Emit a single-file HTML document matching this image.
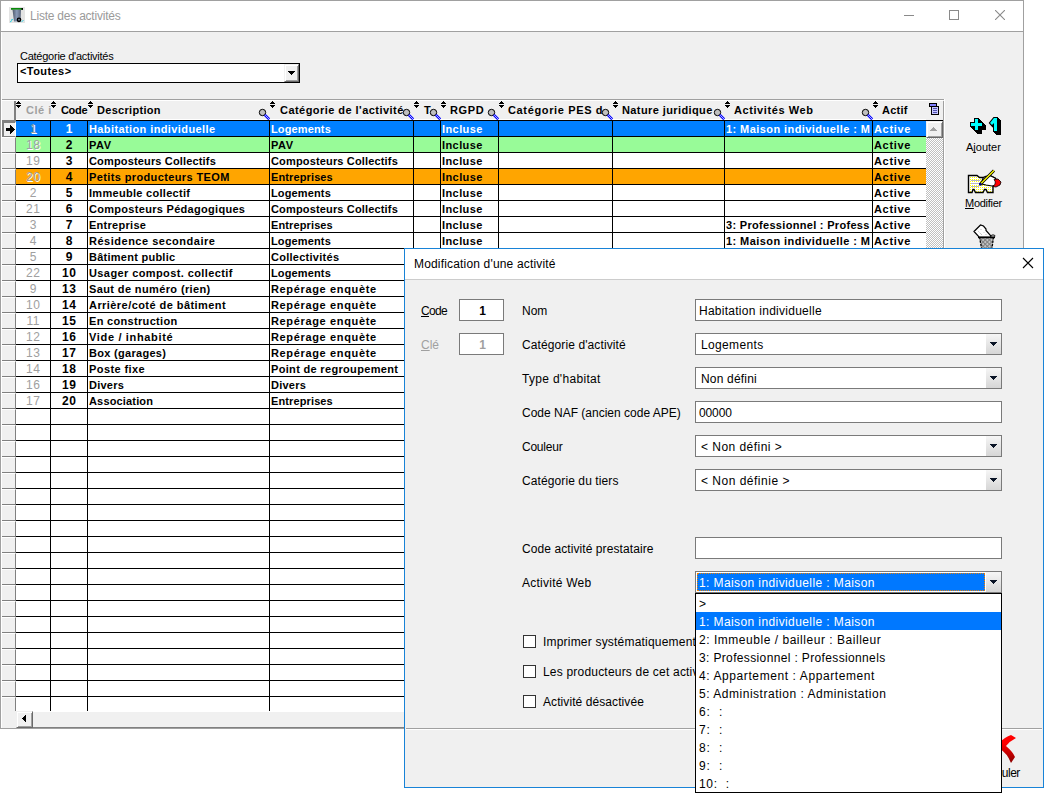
<!DOCTYPE html>
<html><head><meta charset="utf-8">
<style>
*{box-sizing:border-box}
body{margin:0;width:1044px;height:794px;background:#fff;position:relative;overflow:hidden;font-family:"Liberation Sans",sans-serif}
.a{position:absolute}
.t{position:absolute;white-space:nowrap;line-height:16px}
svg{shape-rendering:crispEdges}
.sm{shape-rendering:auto}
</style></head><body>

<div class="a" style="left:0;top:0;width:1024px;height:729px;border:1px solid #a0a0a0;background:#f0f0f0"></div>
<div class="a" style="left:1px;top:1px;width:1022px;height:30px;background:#fff"></div>
<div class="a" style="left:1px;top:31px;width:1022px;height:1px;background:#a0a0a0"></div>
<div class="a" style="left:1px;top:32px;width:1px;height:696px;background:#fff"></div>
<svg class="a sm" style="left:9px;top:7px" width="16" height="16" viewBox="0 0 16 16">
<defs><linearGradient id="bg1" x1="0" y1="0" x2="1" y2="0"><stop offset="0" stop-color="#505a6a"/><stop offset="0.5" stop-color="#8a9ab8"/><stop offset="1" stop-color="#5a6478"/></linearGradient></defs>
<rect x="0" y="0" width="16" height="16" fill="#e4e4e4"/>
<rect x="2" y="1" width="12" height="1.8" fill="#0a8a0a"/><rect x="12.5" y="1" width="1.5" height="1.8" fill="#000"/>
<path d="M3.5 2.8 L12 2.8 L11.5 14.5 L5 14.5 Z" fill="url(#bg1)"/>
<circle cx="10" cy="12.8" r="1.7" fill="#607080" stroke="#000" stroke-width="1.3"/>
<path d="M1 15 L3 13.5 M2 13 L4 12.5 M12.5 15 L14.5 13" stroke="#30d0e0" stroke-width="1"/>
</svg>
<div class="t" style="left:30px;top:8px;font-size:12px;color:#9a9a9a;line-height:16px;letter-spacing:-0.222px;">Liste des activités</div>
<div class="a" style="left:904px;top:15px;width:10px;height:1px;background:#8a8a8a"></div>
<div class="a" style="left:949px;top:10px;width:10px;height:10px;border:1px solid #8a8a8a"></div>
<svg class="a sm" style="left:995px;top:10px" width="10" height="10"><path d="M0 0 L10 10 M10 0 L0 10" stroke="#8a8a8a" stroke-width="1.1"/></svg>
<div class="t" style="left:20px;top:48px;font-size:11px;color:#000;line-height:16px;letter-spacing:-0.250px;">Catégorie d'activités</div>
<div class="a" style="left:17px;top:63px;width:283px;height:20px;border:1px solid #000;background:#fff"></div>
<div class="t" style="left:20px;top:63px;font-size:11px;color:#000;line-height:16px;font-weight:bold;letter-spacing:0.429px;">&lt;Toutes&gt;</div>
<div class="a" style="left:284px;top:64px;width:15px;height:18px;background:#f0f0f0;border-top:1px solid #f0f0f0;border-left:1px solid #f0f0f0;border-right:1px solid #696969;border-bottom:1px solid #696969;box-shadow:inset 1px 1px 0 #fff,inset -1px -1px 0 #a0a0a0"></div>
<svg class="a" style="left:288px;top:71px" width="7" height="4"><path d="M0 0 H7 V1 H6 V2 H5 V3 H4 V4 H3 V3 H2 V2 H1 V1 H0 Z" fill="#000"/></svg>
<div class="a" style="left:2px;top:99px;width:942px;height:1px;background:#a0a0a0"></div>
<div class="a" style="left:2px;top:100px;width:941px;height:1px;background:#fff"></div>
<div class="a" style="left:16px;top:120px;width:910px;height:591px;background:#fff"></div>
<div class="a" style="left:2px;top:121px;width:14px;height:16px;background:#f0f0f0;border-top:2px solid #808080;border-left:2px solid #808080;border-right:1px solid #fff;border-bottom:1px solid #808080"></div>
<div class="a" style="left:2px;top:137px;width:14px;height:16px;background:#f0f0f0;border-top:1px solid #fff;border-right:1px solid #808080;border-bottom:1px solid #808080;"></div>
<div class="a" style="left:2px;top:153px;width:14px;height:16px;background:#f0f0f0;border-top:1px solid #fff;border-right:1px solid #808080;border-bottom:1px solid #808080;"></div>
<div class="a" style="left:2px;top:169px;width:14px;height:16px;background:#f0f0f0;border-top:1px solid #fff;border-right:1px solid #808080;border-bottom:1px solid #808080;"></div>
<div class="a" style="left:2px;top:185px;width:14px;height:16px;background:#f0f0f0;border-top:1px solid #fff;border-right:1px solid #808080;border-bottom:1px solid #808080;"></div>
<div class="a" style="left:2px;top:201px;width:14px;height:16px;background:#f0f0f0;border-top:1px solid #fff;border-right:1px solid #808080;border-bottom:1px solid #808080;"></div>
<div class="a" style="left:2px;top:217px;width:14px;height:16px;background:#f0f0f0;border-top:1px solid #fff;border-right:1px solid #808080;border-bottom:1px solid #808080;"></div>
<div class="a" style="left:2px;top:233px;width:14px;height:16px;background:#f0f0f0;border-top:1px solid #fff;border-right:1px solid #808080;border-bottom:1px solid #808080;"></div>
<div class="a" style="left:2px;top:249px;width:14px;height:16px;background:#f0f0f0;border-top:1px solid #fff;border-right:1px solid #808080;border-bottom:1px solid #808080;"></div>
<div class="a" style="left:2px;top:265px;width:14px;height:16px;background:#f0f0f0;border-top:1px solid #fff;border-right:1px solid #808080;border-bottom:1px solid #808080;"></div>
<div class="a" style="left:2px;top:281px;width:14px;height:16px;background:#f0f0f0;border-top:1px solid #fff;border-right:1px solid #808080;border-bottom:1px solid #808080;"></div>
<div class="a" style="left:2px;top:297px;width:14px;height:16px;background:#f0f0f0;border-top:1px solid #fff;border-right:1px solid #808080;border-bottom:1px solid #808080;"></div>
<div class="a" style="left:2px;top:313px;width:14px;height:16px;background:#f0f0f0;border-top:1px solid #fff;border-right:1px solid #808080;border-bottom:1px solid #808080;"></div>
<div class="a" style="left:2px;top:329px;width:14px;height:16px;background:#f0f0f0;border-top:1px solid #fff;border-right:1px solid #808080;border-bottom:1px solid #808080;"></div>
<div class="a" style="left:2px;top:345px;width:14px;height:16px;background:#f0f0f0;border-top:1px solid #fff;border-right:1px solid #808080;border-bottom:1px solid #808080;"></div>
<div class="a" style="left:2px;top:361px;width:14px;height:16px;background:#f0f0f0;border-top:1px solid #fff;border-right:1px solid #808080;border-bottom:1px solid #808080;"></div>
<div class="a" style="left:2px;top:377px;width:14px;height:16px;background:#f0f0f0;border-top:1px solid #fff;border-right:1px solid #808080;border-bottom:1px solid #808080;"></div>
<div class="a" style="left:2px;top:393px;width:14px;height:16px;background:#f0f0f0;border-top:1px solid #fff;border-right:1px solid #808080;border-bottom:1px solid #808080;"></div>
<div class="a" style="left:2px;top:409px;width:14px;height:16px;background:#f0f0f0;border-top:1px solid #fff;border-right:1px solid #808080;border-bottom:1px solid #808080;"></div>
<div class="a" style="left:2px;top:425px;width:14px;height:16px;background:#f0f0f0;border-top:1px solid #fff;border-right:1px solid #808080;border-bottom:1px solid #808080;"></div>
<div class="a" style="left:2px;top:441px;width:14px;height:16px;background:#f0f0f0;border-top:1px solid #fff;border-right:1px solid #808080;border-bottom:1px solid #808080;"></div>
<div class="a" style="left:2px;top:457px;width:14px;height:16px;background:#f0f0f0;border-top:1px solid #fff;border-right:1px solid #808080;border-bottom:1px solid #808080;"></div>
<div class="a" style="left:2px;top:473px;width:14px;height:16px;background:#f0f0f0;border-top:1px solid #fff;border-right:1px solid #808080;border-bottom:1px solid #808080;"></div>
<div class="a" style="left:2px;top:489px;width:14px;height:16px;background:#f0f0f0;border-top:1px solid #fff;border-right:1px solid #808080;border-bottom:1px solid #808080;"></div>
<div class="a" style="left:2px;top:505px;width:14px;height:16px;background:#f0f0f0;border-top:1px solid #fff;border-right:1px solid #808080;border-bottom:1px solid #808080;"></div>
<div class="a" style="left:2px;top:521px;width:14px;height:16px;background:#f0f0f0;border-top:1px solid #fff;border-right:1px solid #808080;border-bottom:1px solid #808080;"></div>
<div class="a" style="left:2px;top:537px;width:14px;height:16px;background:#f0f0f0;border-top:1px solid #fff;border-right:1px solid #808080;border-bottom:1px solid #808080;"></div>
<div class="a" style="left:2px;top:553px;width:14px;height:16px;background:#f0f0f0;border-top:1px solid #fff;border-right:1px solid #808080;border-bottom:1px solid #808080;"></div>
<div class="a" style="left:2px;top:569px;width:14px;height:16px;background:#f0f0f0;border-top:1px solid #fff;border-right:1px solid #808080;border-bottom:1px solid #808080;"></div>
<div class="a" style="left:2px;top:585px;width:14px;height:16px;background:#f0f0f0;border-top:1px solid #fff;border-right:1px solid #808080;border-bottom:1px solid #808080;"></div>
<div class="a" style="left:2px;top:601px;width:14px;height:16px;background:#f0f0f0;border-top:1px solid #fff;border-right:1px solid #808080;border-bottom:1px solid #808080;"></div>
<div class="a" style="left:2px;top:617px;width:14px;height:16px;background:#f0f0f0;border-top:1px solid #fff;border-right:1px solid #808080;border-bottom:1px solid #808080;"></div>
<div class="a" style="left:2px;top:633px;width:14px;height:16px;background:#f0f0f0;border-top:1px solid #fff;border-right:1px solid #808080;border-bottom:1px solid #808080;"></div>
<div class="a" style="left:2px;top:649px;width:14px;height:16px;background:#f0f0f0;border-top:1px solid #fff;border-right:1px solid #808080;border-bottom:1px solid #808080;"></div>
<div class="a" style="left:2px;top:665px;width:14px;height:16px;background:#f0f0f0;border-top:1px solid #fff;border-right:1px solid #808080;border-bottom:1px solid #808080;"></div>
<div class="a" style="left:2px;top:681px;width:14px;height:16px;background:#f0f0f0;border-top:1px solid #fff;border-right:1px solid #808080;border-bottom:1px solid #808080;"></div>
<div class="a" style="left:2px;top:697px;width:14px;height:14px;background:#f0f0f0;border-top:1px solid #fff;border-right:1px solid #808080;"></div>
<div class="a" style="left:2px;top:101px;width:14px;height:20px;background:#f0f0f0;border-right:1px solid #808080;border-bottom:1px solid #808080"></div>
<div class="a" style="left:14px;top:101px;width:1px;height:19px;background:#808080"></div>
<svg class="a" style="left:6px;top:125px" width="9" height="10"><path d="M0 3 H4 V0 H5 V1 H6 V2 H7 V3 H8 V4 H9 V5 H8 V6 H7 V7 H6 V8 H5 V9 H4 V6 H0 Z" fill="#000"/></svg>
<div class="a" style="left:16px;top:120px;width:910px;height:16px;background:#0080ff"></div>
<div class="a" style="left:16px;top:136px;width:910px;height:16px;background:#98fb98"></div>
<div class="a" style="left:16px;top:168px;width:910px;height:16px;background:#ffa500"></div>
<div class="a" style="left:16px;top:120px;width:910px;height:1px;background:#000"></div>
<div class="a" style="left:16px;top:136px;width:910px;height:1px;background:#000"></div>
<div class="a" style="left:16px;top:152px;width:910px;height:1px;background:#000"></div>
<div class="a" style="left:16px;top:168px;width:910px;height:1px;background:#000"></div>
<div class="a" style="left:16px;top:184px;width:910px;height:1px;background:#000"></div>
<div class="a" style="left:16px;top:200px;width:910px;height:1px;background:#000"></div>
<div class="a" style="left:16px;top:216px;width:910px;height:1px;background:#000"></div>
<div class="a" style="left:16px;top:232px;width:910px;height:1px;background:#000"></div>
<div class="a" style="left:16px;top:248px;width:910px;height:1px;background:#000"></div>
<div class="a" style="left:16px;top:264px;width:910px;height:1px;background:#000"></div>
<div class="a" style="left:16px;top:280px;width:910px;height:1px;background:#000"></div>
<div class="a" style="left:16px;top:296px;width:910px;height:1px;background:#000"></div>
<div class="a" style="left:16px;top:312px;width:910px;height:1px;background:#000"></div>
<div class="a" style="left:16px;top:328px;width:910px;height:1px;background:#000"></div>
<div class="a" style="left:16px;top:344px;width:910px;height:1px;background:#000"></div>
<div class="a" style="left:16px;top:360px;width:910px;height:1px;background:#000"></div>
<div class="a" style="left:16px;top:376px;width:910px;height:1px;background:#000"></div>
<div class="a" style="left:16px;top:392px;width:910px;height:1px;background:#000"></div>
<div class="a" style="left:16px;top:408px;width:910px;height:1px;background:#000"></div>
<div class="a" style="left:16px;top:424px;width:910px;height:1px;background:#000"></div>
<div class="a" style="left:16px;top:440px;width:910px;height:1px;background:#000"></div>
<div class="a" style="left:16px;top:456px;width:910px;height:1px;background:#000"></div>
<div class="a" style="left:16px;top:472px;width:910px;height:1px;background:#000"></div>
<div class="a" style="left:16px;top:488px;width:910px;height:1px;background:#000"></div>
<div class="a" style="left:16px;top:504px;width:910px;height:1px;background:#000"></div>
<div class="a" style="left:16px;top:520px;width:910px;height:1px;background:#000"></div>
<div class="a" style="left:16px;top:536px;width:910px;height:1px;background:#000"></div>
<div class="a" style="left:16px;top:552px;width:910px;height:1px;background:#000"></div>
<div class="a" style="left:16px;top:568px;width:910px;height:1px;background:#000"></div>
<div class="a" style="left:16px;top:584px;width:910px;height:1px;background:#000"></div>
<div class="a" style="left:16px;top:600px;width:910px;height:1px;background:#000"></div>
<div class="a" style="left:16px;top:616px;width:910px;height:1px;background:#000"></div>
<div class="a" style="left:16px;top:632px;width:910px;height:1px;background:#000"></div>
<div class="a" style="left:16px;top:648px;width:910px;height:1px;background:#000"></div>
<div class="a" style="left:16px;top:664px;width:910px;height:1px;background:#000"></div>
<div class="a" style="left:16px;top:680px;width:910px;height:1px;background:#000"></div>
<div class="a" style="left:16px;top:696px;width:910px;height:1px;background:#000"></div>
<div class="a" style="left:50px;top:120px;width:1px;height:591px;background:#000"></div>
<div class="a" style="left:87px;top:120px;width:1px;height:591px;background:#000"></div>
<div class="a" style="left:269px;top:120px;width:1px;height:591px;background:#000"></div>
<div class="a" style="left:413px;top:120px;width:1px;height:591px;background:#000"></div>
<div class="a" style="left:440px;top:120px;width:1px;height:591px;background:#000"></div>
<div class="a" style="left:498px;top:120px;width:1px;height:591px;background:#000"></div>
<div class="a" style="left:612px;top:120px;width:1px;height:591px;background:#000"></div>
<div class="a" style="left:724px;top:120px;width:1px;height:591px;background:#000"></div>
<div class="a" style="left:872px;top:120px;width:1px;height:591px;background:#000"></div>
<div class="t" style="left:16px;top:121px;width:34px;text-align:center;font-size:12px;letter-spacing:0.4px;text-indent:0.4px;color:#a0a0a0;text-shadow:1px 1px 0 #fff">1</div>
<div class="t" style="left:51px;top:121px;width:36px;text-align:center;font-size:12px;font-weight:bold;letter-spacing:0.5px;text-indent:0.5px;color:#fff">1</div>
<div class="t" style="left:89px;top:121px;font-size:11px;color:#fff;line-height:16px;font-weight:bold;letter-spacing:0.395px;">Habitation individuelle</div>
<div class="t" style="left:271px;top:121px;font-size:11px;color:#fff;line-height:16px;font-weight:bold;letter-spacing:0.138px;">Logements</div>
<div class="t" style="left:442px;top:121px;font-size:11px;color:#fff;line-height:16px;font-weight:bold;letter-spacing:0.417px;">Incluse</div>
<div class="t" style="left:726px;top:121px;font-size:11px;color:#fff;line-height:16px;font-weight:bold;letter-spacing:0.428px;">1: Maison individuelle : M</div>
<div class="t" style="left:874px;top:121px;font-size:11px;color:#fff;line-height:16px;font-weight:bold;letter-spacing:0.680px;">Active</div>
<div class="t" style="left:16px;top:137px;width:34px;text-align:center;font-size:12px;letter-spacing:0.4px;text-indent:0.4px;color:#a0a0a0;text-shadow:1px 1px 0 #fff">18</div>
<div class="t" style="left:51px;top:137px;width:36px;text-align:center;font-size:12px;font-weight:bold;letter-spacing:0.5px;text-indent:0.5px;color:#000">2</div>
<div class="t" style="left:89px;top:137px;font-size:11px;color:#000;line-height:16px;font-weight:bold;letter-spacing:0.500px;">PAV</div>
<div class="t" style="left:271px;top:137px;font-size:11px;color:#000;line-height:16px;font-weight:bold;letter-spacing:0.500px;">PAV</div>
<div class="t" style="left:442px;top:137px;font-size:11px;color:#000;line-height:16px;font-weight:bold;letter-spacing:0.417px;">Incluse</div>
<div class="t" style="left:874px;top:137px;font-size:11px;color:#000;line-height:16px;font-weight:bold;letter-spacing:0.680px;">Active</div>
<div class="t" style="left:16px;top:153px;width:34px;text-align:center;font-size:12px;letter-spacing:0.4px;text-indent:0.4px;color:#a0a0a0;text-shadow:1px 1px 0 #fff">19</div>
<div class="t" style="left:51px;top:153px;width:36px;text-align:center;font-size:12px;font-weight:bold;letter-spacing:0.5px;text-indent:0.5px;color:#000">3</div>
<div class="t" style="left:89px;top:153px;font-size:11px;color:#000;line-height:16px;font-weight:bold;letter-spacing:0.157px;">Composteurs Collectifs</div>
<div class="t" style="left:271px;top:153px;font-size:11px;color:#000;line-height:16px;font-weight:bold;letter-spacing:0.157px;">Composteurs Collectifs</div>
<div class="t" style="left:442px;top:153px;font-size:11px;color:#000;line-height:16px;font-weight:bold;letter-spacing:0.417px;">Incluse</div>
<div class="t" style="left:874px;top:153px;font-size:11px;color:#000;line-height:16px;font-weight:bold;letter-spacing:0.680px;">Active</div>
<div class="t" style="left:16px;top:169px;width:34px;text-align:center;font-size:12px;letter-spacing:0.4px;text-indent:0.4px;color:#a0a0a0;text-shadow:1px 1px 0 #fff">20</div>
<div class="t" style="left:51px;top:169px;width:36px;text-align:center;font-size:12px;font-weight:bold;letter-spacing:0.5px;text-indent:0.5px;color:#000">4</div>
<div class="t" style="left:89px;top:169px;font-size:11px;color:#000;line-height:16px;font-weight:bold;letter-spacing:0.377px;">Petits producteurs TEOM</div>
<div class="t" style="left:271px;top:169px;font-size:11px;color:#000;line-height:16px;font-weight:bold;letter-spacing:0.120px;">Entreprises</div>
<div class="t" style="left:442px;top:169px;font-size:11px;color:#000;line-height:16px;font-weight:bold;letter-spacing:0.417px;">Incluse</div>
<div class="t" style="left:874px;top:169px;font-size:11px;color:#000;line-height:16px;font-weight:bold;letter-spacing:0.680px;">Active</div>
<div class="t" style="left:16px;top:185px;width:34px;text-align:center;font-size:12px;letter-spacing:0.4px;text-indent:0.4px;color:#a0a0a0;text-shadow:1px 1px 0 #fff">2</div>
<div class="t" style="left:51px;top:185px;width:36px;text-align:center;font-size:12px;font-weight:bold;letter-spacing:0.5px;text-indent:0.5px;color:#000">5</div>
<div class="t" style="left:89px;top:185px;font-size:11px;color:#000;line-height:16px;font-weight:bold;letter-spacing:0.294px;">Immeuble collectif</div>
<div class="t" style="left:271px;top:185px;font-size:11px;color:#000;line-height:16px;font-weight:bold;letter-spacing:0.138px;">Logements</div>
<div class="t" style="left:442px;top:185px;font-size:11px;color:#000;line-height:16px;font-weight:bold;letter-spacing:0.417px;">Incluse</div>
<div class="t" style="left:874px;top:185px;font-size:11px;color:#000;line-height:16px;font-weight:bold;letter-spacing:0.680px;">Active</div>
<div class="t" style="left:16px;top:201px;width:34px;text-align:center;font-size:12px;letter-spacing:0.4px;text-indent:0.4px;color:#a0a0a0;text-shadow:1px 1px 0 #fff">21</div>
<div class="t" style="left:51px;top:201px;width:36px;text-align:center;font-size:12px;font-weight:bold;letter-spacing:0.5px;text-indent:0.5px;color:#000">6</div>
<div class="t" style="left:89px;top:201px;font-size:11px;color:#000;line-height:16px;font-weight:bold;letter-spacing:0.296px;">Composteurs Pédagogiques</div>
<div class="t" style="left:271px;top:201px;font-size:11px;color:#000;line-height:16px;font-weight:bold;letter-spacing:0.157px;">Composteurs Collectifs</div>
<div class="t" style="left:442px;top:201px;font-size:11px;color:#000;line-height:16px;font-weight:bold;letter-spacing:0.417px;">Incluse</div>
<div class="t" style="left:874px;top:201px;font-size:11px;color:#000;line-height:16px;font-weight:bold;letter-spacing:0.680px;">Active</div>
<div class="t" style="left:16px;top:217px;width:34px;text-align:center;font-size:12px;letter-spacing:0.4px;text-indent:0.4px;color:#a0a0a0;text-shadow:1px 1px 0 #fff">3</div>
<div class="t" style="left:51px;top:217px;width:36px;text-align:center;font-size:12px;font-weight:bold;letter-spacing:0.5px;text-indent:0.5px;color:#000">7</div>
<div class="t" style="left:89px;top:217px;font-size:11px;color:#000;line-height:16px;font-weight:bold;letter-spacing:0.278px;">Entreprise</div>
<div class="t" style="left:271px;top:217px;font-size:11px;color:#000;line-height:16px;font-weight:bold;letter-spacing:0.120px;">Entreprises</div>
<div class="t" style="left:442px;top:217px;font-size:11px;color:#000;line-height:16px;font-weight:bold;letter-spacing:0.417px;">Incluse</div>
<div class="t" style="left:726px;top:217px;font-size:11px;color:#000;line-height:16px;font-weight:bold;letter-spacing:0.308px;">3: Professionnel : Profess</div>
<div class="t" style="left:874px;top:217px;font-size:11px;color:#000;line-height:16px;font-weight:bold;letter-spacing:0.680px;">Active</div>
<div class="t" style="left:16px;top:233px;width:34px;text-align:center;font-size:12px;letter-spacing:0.4px;text-indent:0.4px;color:#a0a0a0;text-shadow:1px 1px 0 #fff">4</div>
<div class="t" style="left:51px;top:233px;width:36px;text-align:center;font-size:12px;font-weight:bold;letter-spacing:0.5px;text-indent:0.5px;color:#000">8</div>
<div class="t" style="left:89px;top:233px;font-size:11px;color:#000;line-height:16px;font-weight:bold;letter-spacing:0.511px;">Résidence secondaire</div>
<div class="t" style="left:271px;top:233px;font-size:11px;color:#000;line-height:16px;font-weight:bold;letter-spacing:0.138px;">Logements</div>
<div class="t" style="left:442px;top:233px;font-size:11px;color:#000;line-height:16px;font-weight:bold;letter-spacing:0.417px;">Incluse</div>
<div class="t" style="left:726px;top:233px;font-size:11px;color:#000;line-height:16px;font-weight:bold;letter-spacing:0.428px;">1: Maison individuelle : M</div>
<div class="t" style="left:874px;top:233px;font-size:11px;color:#000;line-height:16px;font-weight:bold;letter-spacing:0.680px;">Active</div>
<div class="t" style="left:16px;top:249px;width:34px;text-align:center;font-size:12px;letter-spacing:0.4px;text-indent:0.4px;color:#a0a0a0;text-shadow:1px 1px 0 #fff">5</div>
<div class="t" style="left:51px;top:249px;width:36px;text-align:center;font-size:12px;font-weight:bold;letter-spacing:0.5px;text-indent:0.5px;color:#000">9</div>
<div class="t" style="left:89px;top:249px;font-size:11px;color:#000;line-height:16px;font-weight:bold;letter-spacing:0.257px;">Bâtiment public</div>
<div class="t" style="left:271px;top:249px;font-size:11px;color:#000;line-height:16px;font-weight:bold;letter-spacing:0.267px;">Collectivités</div>
<div class="t" style="left:16px;top:265px;width:34px;text-align:center;font-size:12px;letter-spacing:0.4px;text-indent:0.4px;color:#a0a0a0;text-shadow:1px 1px 0 #fff">22</div>
<div class="t" style="left:51px;top:265px;width:36px;text-align:center;font-size:12px;font-weight:bold;letter-spacing:0.5px;text-indent:0.5px;color:#000">10</div>
<div class="t" style="left:89px;top:265px;font-size:11px;color:#000;line-height:16px;font-weight:bold;letter-spacing:0.400px;">Usager compost. collectif</div>
<div class="t" style="left:271px;top:265px;font-size:11px;color:#000;line-height:16px;font-weight:bold;letter-spacing:0.138px;">Logements</div>
<div class="t" style="left:16px;top:281px;width:34px;text-align:center;font-size:12px;letter-spacing:0.4px;text-indent:0.4px;color:#a0a0a0;text-shadow:1px 1px 0 #fff">9</div>
<div class="t" style="left:51px;top:281px;width:36px;text-align:center;font-size:12px;font-weight:bold;letter-spacing:0.5px;text-indent:0.5px;color:#000">13</div>
<div class="t" style="left:89px;top:281px;font-size:11px;color:#000;line-height:16px;font-weight:bold;letter-spacing:0.380px;">Saut de numéro (rien)</div>
<div class="t" style="left:271px;top:281px;font-size:11px;color:#000;line-height:16px;font-weight:bold;letter-spacing:0.647px;">Repérage enquète</div>
<div class="t" style="left:16px;top:297px;width:34px;text-align:center;font-size:12px;letter-spacing:0.4px;text-indent:0.4px;color:#a0a0a0;text-shadow:1px 1px 0 #fff">10</div>
<div class="t" style="left:51px;top:297px;width:36px;text-align:center;font-size:12px;font-weight:bold;letter-spacing:0.5px;text-indent:0.5px;color:#000">14</div>
<div class="t" style="left:89px;top:297px;font-size:11px;color:#000;line-height:16px;font-weight:bold;letter-spacing:0.439px;">Arrière/coté de bâtiment</div>
<div class="t" style="left:271px;top:297px;font-size:11px;color:#000;line-height:16px;font-weight:bold;letter-spacing:0.647px;">Repérage enquète</div>
<div class="t" style="left:16px;top:313px;width:34px;text-align:center;font-size:12px;letter-spacing:0.4px;text-indent:0.4px;color:#a0a0a0;text-shadow:1px 1px 0 #fff">11</div>
<div class="t" style="left:51px;top:313px;width:36px;text-align:center;font-size:12px;font-weight:bold;letter-spacing:0.5px;text-indent:0.5px;color:#000">15</div>
<div class="t" style="left:89px;top:313px;font-size:11px;color:#000;line-height:16px;font-weight:bold;letter-spacing:0.321px;">En construction</div>
<div class="t" style="left:271px;top:313px;font-size:11px;color:#000;line-height:16px;font-weight:bold;letter-spacing:0.647px;">Repérage enquète</div>
<div class="t" style="left:16px;top:329px;width:34px;text-align:center;font-size:12px;letter-spacing:0.4px;text-indent:0.4px;color:#a0a0a0;text-shadow:1px 1px 0 #fff">12</div>
<div class="t" style="left:51px;top:329px;width:36px;text-align:center;font-size:12px;font-weight:bold;letter-spacing:0.5px;text-indent:0.5px;color:#000">16</div>
<div class="t" style="left:89px;top:329px;font-size:11px;color:#000;line-height:16px;font-weight:bold;letter-spacing:0.664px;">Vide / inhabité</div>
<div class="t" style="left:271px;top:329px;font-size:11px;color:#000;line-height:16px;font-weight:bold;letter-spacing:0.647px;">Repérage enquète</div>
<div class="t" style="left:16px;top:345px;width:34px;text-align:center;font-size:12px;letter-spacing:0.4px;text-indent:0.4px;color:#a0a0a0;text-shadow:1px 1px 0 #fff">13</div>
<div class="t" style="left:51px;top:345px;width:36px;text-align:center;font-size:12px;font-weight:bold;letter-spacing:0.5px;text-indent:0.5px;color:#000">17</div>
<div class="t" style="left:89px;top:345px;font-size:11px;color:#000;line-height:16px;font-weight:bold;letter-spacing:0.300px;">Box (garages)</div>
<div class="t" style="left:271px;top:345px;font-size:11px;color:#000;line-height:16px;font-weight:bold;letter-spacing:0.647px;">Repérage enquète</div>
<div class="t" style="left:16px;top:361px;width:34px;text-align:center;font-size:12px;letter-spacing:0.4px;text-indent:0.4px;color:#a0a0a0;text-shadow:1px 1px 0 #fff">14</div>
<div class="t" style="left:51px;top:361px;width:36px;text-align:center;font-size:12px;font-weight:bold;letter-spacing:0.5px;text-indent:0.5px;color:#000">18</div>
<div class="t" style="left:89px;top:361px;font-size:11px;color:#000;line-height:16px;font-weight:bold;letter-spacing:0.411px;">Poste fixe</div>
<div class="t" style="left:271px;top:361px;font-size:11px;color:#000;line-height:16px;font-weight:bold;letter-spacing:0.325px;">Point de regroupement</div>
<div class="t" style="left:16px;top:377px;width:34px;text-align:center;font-size:12px;letter-spacing:0.4px;text-indent:0.4px;color:#a0a0a0;text-shadow:1px 1px 0 #fff">16</div>
<div class="t" style="left:51px;top:377px;width:36px;text-align:center;font-size:12px;font-weight:bold;letter-spacing:0.5px;text-indent:0.5px;color:#000">19</div>
<div class="t" style="left:89px;top:377px;font-size:11px;color:#000;line-height:16px;font-weight:bold;letter-spacing:0.240px;">Divers</div>
<div class="t" style="left:271px;top:377px;font-size:11px;color:#000;line-height:16px;font-weight:bold;letter-spacing:0.240px;">Divers</div>
<div class="t" style="left:16px;top:393px;width:34px;text-align:center;font-size:12px;letter-spacing:0.4px;text-indent:0.4px;color:#a0a0a0;text-shadow:1px 1px 0 #fff">17</div>
<div class="t" style="left:51px;top:393px;width:36px;text-align:center;font-size:12px;font-weight:bold;letter-spacing:0.5px;text-indent:0.5px;color:#000">20</div>
<div class="t" style="left:89px;top:393px;font-size:11px;color:#000;line-height:16px;font-weight:bold;letter-spacing:0.160px;">Association</div>
<div class="t" style="left:271px;top:393px;font-size:11px;color:#000;line-height:16px;font-weight:bold;letter-spacing:0.120px;">Entreprises</div>
<div class="a" style="left:16px;top:101px;width:927px;height:18px;background:#f0f0f0"></div>
<div class="a" style="left:16px;top:119px;width:910px;height:1px;background:#fff"></div>
<div class="a" style="left:943px;top:101px;width:1px;height:20px;background:#808080"></div>
<div class="t" style="left:26px;top:102px;font-size:11px;color:#a0a0a0;line-height:16px;font-weight:bold;letter-spacing:0.500px;">Clé i</div>
<svg class="a" style="left:16px;top:101px" width="5" height="8"><path d="M2 0 H3 V1 H4 V2 H5 V3 H0 V2 H1 V1 H2 Z M0 4 H5 V5 H4 V6 H3 V7 H2 V6 H1 V5 H0 Z" fill="#000"/></svg>
<div class="t" style="left:61px;top:102px;font-size:11px;color:#000;line-height:16px;font-weight:bold;letter-spacing:-0.333px;">Code</div>
<svg class="a" style="left:51px;top:101px" width="5" height="8"><path d="M2 0 H3 V1 H4 V2 H5 V3 H0 V2 H1 V1 H2 Z M0 4 H5 V5 H4 V6 H3 V7 H2 V6 H1 V5 H0 Z" fill="#000"/></svg>
<div class="t" style="left:97px;top:102px;font-size:11px;color:#000;line-height:16px;font-weight:bold;letter-spacing:0.300px;">Description</div>
<svg class="a" style="left:88px;top:101px" width="5" height="8"><path d="M2 0 H3 V1 H4 V2 H5 V3 H0 V2 H1 V1 H2 Z M0 4 H5 V5 H4 V6 H3 V7 H2 V6 H1 V5 H0 Z" fill="#000"/></svg>
<div class="t" style="left:280px;top:102px;font-size:11px;color:#000;line-height:16px;font-weight:bold;letter-spacing:0.455px;">Catégorie de l'activité</div>
<svg class="a" style="left:270px;top:101px" width="5" height="8"><path d="M2 0 H3 V1 H4 V2 H5 V3 H0 V2 H1 V1 H2 Z M0 4 H5 V5 H4 V6 H3 V7 H2 V6 H1 V5 H0 Z" fill="#000"/></svg>
<div class="t" style="left:424px;top:102px;font-size:11px;color:#000;line-height:16px;font-weight:bold;letter-spacing:0.280px;">T</div>
<svg class="a" style="left:414px;top:101px" width="5" height="8"><path d="M2 0 H3 V1 H4 V2 H5 V3 H0 V2 H1 V1 H2 Z M0 4 H5 V5 H4 V6 H3 V7 H2 V6 H1 V5 H0 Z" fill="#000"/></svg>
<div class="t" style="left:450px;top:102px;font-size:11px;color:#000;line-height:16px;font-weight:bold;letter-spacing:0.667px;">RGPD</div>
<svg class="a" style="left:441px;top:101px" width="5" height="8"><path d="M2 0 H3 V1 H4 V2 H5 V3 H0 V2 H1 V1 H2 Z M0 4 H5 V5 H4 V6 H3 V7 H2 V6 H1 V5 H0 Z" fill="#000"/></svg>
<div class="t" style="left:508px;top:102px;font-size:11px;color:#000;line-height:16px;font-weight:bold;letter-spacing:0.643px;">Catégorie PES d</div>
<svg class="a" style="left:499px;top:101px" width="5" height="8"><path d="M2 0 H3 V1 H4 V2 H5 V3 H0 V2 H1 V1 H2 Z M0 4 H5 V5 H4 V6 H3 V7 H2 V6 H1 V5 H0 Z" fill="#000"/></svg>
<div class="t" style="left:622px;top:102px;font-size:11px;color:#000;line-height:16px;font-weight:bold;letter-spacing:0.400px;">Nature juridique</div>
<svg class="a" style="left:613px;top:101px" width="5" height="8"><path d="M2 0 H3 V1 H4 V2 H5 V3 H0 V2 H1 V1 H2 Z M0 4 H5 V5 H4 V6 H3 V7 H2 V6 H1 V5 H0 Z" fill="#000"/></svg>
<div class="t" style="left:734px;top:102px;font-size:11px;color:#000;line-height:16px;font-weight:bold;letter-spacing:0.583px;">Activités Web</div>
<svg class="a" style="left:725px;top:101px" width="5" height="8"><path d="M2 0 H3 V1 H4 V2 H5 V3 H0 V2 H1 V1 H2 Z M0 4 H5 V5 H4 V6 H3 V7 H2 V6 H1 V5 H0 Z" fill="#000"/></svg>
<div class="t" style="left:882px;top:102px;font-size:11px;color:#000;line-height:16px;font-weight:bold;letter-spacing:0.250px;">Actif</div>
<svg class="a" style="left:873px;top:101px" width="5" height="8"><path d="M2 0 H3 V1 H4 V2 H5 V3 H0 V2 H1 V1 H2 Z M0 4 H5 V5 H4 V6 H3 V7 H2 V6 H1 V5 H0 Z" fill="#000"/></svg>
<svg class="a sm" style="left:258px;top:108px" width="12" height="12"><circle cx="4.5" cy="4.5" r="3.2" fill="#c0c0c0" stroke="#000" stroke-width="1"/><path d="M6.8 6.8 L11.2 11.2" stroke="#0000ff" stroke-width="2.6"/><path d="M7.2 7.2 L11 11" stroke="#fff" stroke-width="0.7"/></svg>
<svg class="a sm" style="left:402px;top:108px" width="12" height="12"><circle cx="4.5" cy="4.5" r="3.2" fill="#c0c0c0" stroke="#000" stroke-width="1"/><path d="M6.8 6.8 L11.2 11.2" stroke="#0000ff" stroke-width="2.6"/><path d="M7.2 7.2 L11 11" stroke="#fff" stroke-width="0.7"/></svg>
<svg class="a sm" style="left:429px;top:108px" width="12" height="12"><circle cx="4.5" cy="4.5" r="3.2" fill="#c0c0c0" stroke="#000" stroke-width="1"/><path d="M6.8 6.8 L11.2 11.2" stroke="#0000ff" stroke-width="2.6"/><path d="M7.2 7.2 L11 11" stroke="#fff" stroke-width="0.7"/></svg>
<svg class="a sm" style="left:487px;top:108px" width="12" height="12"><circle cx="4.5" cy="4.5" r="3.2" fill="#c0c0c0" stroke="#000" stroke-width="1"/><path d="M6.8 6.8 L11.2 11.2" stroke="#0000ff" stroke-width="2.6"/><path d="M7.2 7.2 L11 11" stroke="#fff" stroke-width="0.7"/></svg>
<svg class="a sm" style="left:601px;top:108px" width="12" height="12"><circle cx="4.5" cy="4.5" r="3.2" fill="#c0c0c0" stroke="#000" stroke-width="1"/><path d="M6.8 6.8 L11.2 11.2" stroke="#0000ff" stroke-width="2.6"/><path d="M7.2 7.2 L11 11" stroke="#fff" stroke-width="0.7"/></svg>
<svg class="a sm" style="left:713px;top:108px" width="12" height="12"><circle cx="4.5" cy="4.5" r="3.2" fill="#c0c0c0" stroke="#000" stroke-width="1"/><path d="M6.8 6.8 L11.2 11.2" stroke="#0000ff" stroke-width="2.6"/><path d="M7.2 7.2 L11 11" stroke="#fff" stroke-width="0.7"/></svg>
<svg class="a sm" style="left:861px;top:108px" width="12" height="12"><circle cx="4.5" cy="4.5" r="3.2" fill="#c0c0c0" stroke="#000" stroke-width="1"/><path d="M6.8 6.8 L11.2 11.2" stroke="#0000ff" stroke-width="2.6"/><path d="M7.2 7.2 L11 11" stroke="#fff" stroke-width="0.7"/></svg>
<svg class="a" style="left:929px;top:103px" width="10" height="12"><rect x="0" y="0" width="8" height="4" fill="#000"/><rect x="1" y="1" width="6" height="2" fill="#8080ff"/><rect x="2" y="3" width="8" height="9" fill="#000"/><rect x="3" y="4" width="6" height="7" fill="#c8c8ff"/><path d="M4 5 H8 V6 H4 Z M4 7 H8 V8 H4 Z M4 9 H8 V10 H4 Z" fill="#5050b0"/></svg>
<div class="a" style="left:926px;top:120px;width:17px;height:130px;background-color:#fff;background-image:linear-gradient(45deg,#c0c0c0 25%,transparent 25%,transparent 75%,#c0c0c0 75%),linear-gradient(45deg,#c0c0c0 25%,transparent 25%,transparent 75%,#c0c0c0 75%);background-size:2px 2px;background-position:0 0,1px 1px"></div>
<div class="a" style="left:926px;top:121px;width:17px;height:17px;background:#f0f0f0;border-top:1px solid #f0f0f0;border-left:1px solid #f0f0f0;border-right:1px solid #696969;border-bottom:1px solid #696969;box-shadow:inset 1px 1px 0 #fff,inset -1px -1px 0 #a0a0a0"></div>
<div class="a" style="left:16px;top:120px;width:927px;height:1px;background:#000"></div>
<svg class="a" style="left:930px;top:127px" width="7" height="4"><path d="M3 0 H4 V1 H5 V2 H6 V3 H7 V4 H0 V3 H1 V2 H2 V1 H3 Z" fill="#a0a0a0"/></svg>
<div class="a" style="left:16px;top:711px;width:927px;height:17px;background:#f0f0f0;border-top:1px solid #fff;border-bottom:1px solid #808080"></div>
<div class="a" style="left:16px;top:711px;width:17px;height:17px;background:#f0f0f0;border-top:1px solid #f0f0f0;border-left:1px solid #f0f0f0;border-right:1px solid #696969;border-bottom:1px solid #696969;box-shadow:inset 1px 1px 0 #fff,inset -1px -1px 0 #a0a0a0"></div>
<svg class="a" style="left:22px;top:715px" width="4" height="7"><path d="M3 0 H4 V7 H3 V6 H2 V5 H1 V4 H0 V3 H1 V2 H2 V1 H3 Z" fill="#000"/></svg>
<div class="a" style="left:2px;top:711px;width:14px;height:17px;background:#f0f0f0"></div>
<div class="a" style="left:943px;top:101px;width:1px;height:627px;background:#a0a0a0"></div>
<div class="a" style="left:944px;top:99px;width:1px;height:629px;background:#fff"></div>
<svg class="a sm" style="left:965px;top:112px" width="40" height="28" viewBox="0 0 40 28">
<path d="M10 7 H13 V11 H17 V14 H13 V18 H10 V14 H6 V11 H10 Z" transform="translate(3,3)" fill="#000" stroke="#000" stroke-width="2" stroke-linejoin="miter"/>
<path d="M10 7 H13 V11 H17 V14 H13 V18 H10 V14 H6 V11 H10 Z" transform="translate(2,2)" fill="#000" stroke="#000" stroke-width="2" stroke-linejoin="miter"/>
<path d="M10 7 H13 V11 H17 V14 H13 V18 H10 V14 H6 V11 H10 Z" transform="translate(1,1)" fill="#000" stroke="#000" stroke-width="2" stroke-linejoin="miter"/>
<path d="M10 7 H13 V11 H17 V14 H13 V18 H10 V14 H6 V11 H10 Z" fill="#000" stroke="#000" stroke-width="2"/>
<path d="M10 7 H13 V11 H17 V14 H13 V18 H10 V14 H6 V11 H10 Z" fill="#00ffff"/>
<path d="M29 6 H32 V19 H29 V11 L27 13 L25 11 Z" transform="translate(3,3)" fill="#000" stroke="#000" stroke-width="2" stroke-linejoin="miter"/>
<path d="M29 6 H32 V19 H29 V11 L27 13 L25 11 Z" transform="translate(2,2)" fill="#000" stroke="#000" stroke-width="2" stroke-linejoin="miter"/>
<path d="M29 6 H32 V19 H29 V11 L27 13 L25 11 Z" transform="translate(1,1)" fill="#000" stroke="#000" stroke-width="2" stroke-linejoin="miter"/>
<path d="M29 6 H32 V19 H29 V11 L27 13 L25 11 Z" fill="#000" stroke="#000" stroke-width="2"/>
<path d="M29 6 H32 V19 H29 V11 L27 13 L25 11 Z" fill="#00ffff"/>
</svg>
<div class="t" style="left:966px;top:139px;font-size:11px;color:#000;line-height:16px;">A<span style="text-decoration:underline;text-decoration-skip-ink:none">j</span>outer</div>
<svg class="a sm" style="left:964px;top:165px" width="40" height="32" viewBox="0 0 40 32">
<defs><pattern id="yd" width="2" height="2" patternUnits="userSpaceOnUse"><rect width="2" height="2" fill="#fff"/><rect width="1" height="1" fill="#ffff00"/></pattern></defs>
<path d="M4.5 10.5 H13 L15.5 12.5 H22 L26 10.5 L31 13 L29 21 L29 27.5 H23.5 L22 24.5 L20.5 24.5 L19 27.5 H11.5 L10 24.5 L9 24.5 L8 27.5 H4.5 Z" fill="url(#yd)" stroke="#000" stroke-width="1.4"/>
<path d="M7 15.5 H16 M7 18.5 H16 M7 21.5 H15" stroke="#b8b8c8" stroke-width="1"/>
<path d="M18 16 Q19 11 24 11 L27 11 L31 13 L33 15 L33 20 L28 21 L22 20 L18 19 Z" fill="#fff" stroke="#000" stroke-width="1.2"/>
<path d="M30 14.5 L34 14 L37 17 L36 20 L32 22 L29 21.5 Q33 18 30 14.5 Z" fill="#ff0000" stroke="#000" stroke-width="0.8"/>
<path d="M16 19.5 L30 5.5" stroke="#000" stroke-width="3"/>
<path d="M16.5 19 L30 5.5" stroke="#ffff00" stroke-width="1.2"/>
<rect x="15" y="18" width="2.5" height="2.5" fill="#000080"/>
</svg>
<div class="t" style="left:965px;top:195px;font-size:11px;color:#000;line-height:16px;letter-spacing:-0.286px;"><span style="text-decoration:underline">M</span>odifier</div>
<svg class="a sm" style="left:964px;top:218px" width="40" height="30" viewBox="0 0 40 30">
<defs><pattern id="gd" width="3" height="3" patternUnits="userSpaceOnUse" patternTransform="rotate(45)"><rect width="3" height="3" fill="#c4c4c4"/><rect width="1" height="3" fill="#808080"/><rect width="3" height="1" fill="#808080"/></pattern></defs>
<path d="M15.5 19 H29.5 L28 30 H17.5 Z" fill="url(#gd)"/>
<path d="M15.5 19 L17.5 30 M29.5 19 L28 30" stroke="#000" stroke-width="1.3" stroke-dasharray="2.5 1"/>
<path d="M10 13.5 L16.5 7 L19.5 8 L22 11 L22 12.5 L27 18 L26.5 19 H15 Z" fill="#fff" stroke="#000" stroke-width="1.2"/>
<path d="M14.5 13.5 L18 17 M16.5 11 L17.5 12 M19.5 14 L20 14.5 M21.5 16 L23 17.5" stroke="#909090" stroke-width="0.8" stroke-dasharray="1 1"/>
<path d="M14 19.5 H31" stroke="#000" stroke-width="1.4"/>
<path d="M27 17.5 Q29 16 31 17.5 L30.5 19 H27 Z" fill="#b0b0b0" stroke="#000" stroke-width="0.8"/>
</svg>
<div class="a" style="left:404px;top:248px;width:640px;height:540px;border:1px solid #1883d7;background:#f0f0f0"></div>
<div class="a" style="left:405px;top:249px;width:638px;height:30px;background:#fff"></div>
<div class="a" style="left:405px;top:279px;width:638px;height:1px;background:#cccccc"></div>
<div class="t" style="left:414px;top:256px;font-size:12px;color:#000;line-height:16px;letter-spacing:0.173px;">Modification d'une activité</div>
<svg class="a sm" style="left:1022px;top:257px" width="12" height="12"><path d="M1 1 L11 11 M11 1 L1 11" stroke="#000" stroke-width="1.1"/></svg>
<div class="t" style="left:421px;top:303px;font-size:12px;color:#000;line-height:16px;letter-spacing:-0.667px;"><span style="text-decoration:underline">C</span>ode</div>
<div class="a" style="left:459px;top:299px;width:45px;height:22px;border:1px solid #7a7a7a;background:#fff"></div>
<div class="t" style="left:460px;top:303px;width:45px;text-align:center;font-weight:bold;font-size:12px">1</div>
<div class="t" style="left:421px;top:337px;font-size:12px;color:#a0a0a0;line-height:16px;"><span style="text-decoration:underline">C</span>lé</div>
<div class="a" style="left:459px;top:333px;width:45px;height:22px;border:1px solid #7a7a7a;background:#fff"></div>
<div class="t" style="left:460px;top:337px;width:45px;text-align:center;font-weight:bold;font-size:12px;color:#a0a0a0">1</div>
<div class="t" style="left:522px;top:303px;font-size:12px;color:#000;line-height:16px;">Nom</div>
<div class="a" style="left:695px;top:299px;width:307px;height:22px;border:1px solid #7a7a7a;background:#fff"></div>
<div class="t" style="left:699px;top:303px;font-size:12px;color:#000;line-height:16px;letter-spacing:0.264px;">Habitation individuelle</div>
<div class="t" style="left:522px;top:337px;font-size:12px;color:#000;line-height:16px;letter-spacing:0.105px;">Catégorie d'activité</div>
<div class="a" style="left:695px;top:333px;width:307px;height:22px;border:1px solid #7a7a7a;background:#fff"></div>
<div class="a" style="left:986px;top:334px;width:15px;height:20px;background:linear-gradient(#f6f6f6,#d6d6d6)"></div>
<svg class="a" style="left:990px;top:342px" width="7" height="4"><path d="M0 0 H7 V1 H6 V2 H5 V3 H4 V4 H3 V3 H2 V2 H1 V1 H0 Z" fill="#0a1426"/></svg>
<div class="t" style="left:701px;top:337px;font-size:12px;color:#000;line-height:16px;letter-spacing:0.350px;">Logements</div>
<div class="t" style="left:522px;top:371px;font-size:12px;color:#000;line-height:16px;letter-spacing:0.308px;">Type d'habitat</div>
<div class="a" style="left:695px;top:367px;width:307px;height:22px;border:1px solid #7a7a7a;background:#fff"></div>
<div class="a" style="left:986px;top:368px;width:15px;height:20px;background:linear-gradient(#f6f6f6,#d6d6d6)"></div>
<svg class="a" style="left:990px;top:376px" width="7" height="4"><path d="M0 0 H7 V1 H6 V2 H5 V3 H4 V4 H3 V3 H2 V2 H1 V1 H0 Z" fill="#0a1426"/></svg>
<div class="t" style="left:701px;top:371px;font-size:12px;color:#000;line-height:16px;letter-spacing:0.189px;">Non défini</div>
<div class="t" style="left:522px;top:405px;font-size:12px;color:#000;line-height:16px;">Code NAF (ancien code APE)</div>
<div class="a" style="left:695px;top:401px;width:307px;height:22px;border:1px solid #7a7a7a;background:#fff"></div>
<div class="t" style="left:699px;top:405px;font-size:12px;color:#000;line-height:16px;letter-spacing:-0.125px;">00000</div>
<div class="t" style="left:522px;top:439px;font-size:12px;color:#000;line-height:16px;letter-spacing:-0.233px;">Couleur</div>
<div class="a" style="left:695px;top:435px;width:307px;height:22px;border:1px solid #7a7a7a;background:#fff"></div>
<div class="a" style="left:986px;top:436px;width:15px;height:20px;background:linear-gradient(#f6f6f6,#d6d6d6)"></div>
<svg class="a" style="left:990px;top:444px" width="7" height="4"><path d="M0 0 H7 V1 H6 V2 H5 V3 H4 V4 H3 V3 H2 V2 H1 V1 H0 Z" fill="#0a1426"/></svg>
<div class="t" style="left:701px;top:439px;font-size:12px;color:#000;line-height:16px;letter-spacing:0.462px;">&lt; Non défini &gt;</div>
<div class="t" style="left:522px;top:473px;font-size:12px;color:#000;line-height:16px;letter-spacing:0.100px;">Catégorie du tiers</div>
<div class="a" style="left:695px;top:469px;width:307px;height:22px;border:1px solid #7a7a7a;background:#fff"></div>
<div class="a" style="left:986px;top:470px;width:15px;height:20px;background:linear-gradient(#f6f6f6,#d6d6d6)"></div>
<svg class="a" style="left:990px;top:478px" width="7" height="4"><path d="M0 0 H7 V1 H6 V2 H5 V3 H4 V4 H3 V3 H2 V2 H1 V1 H0 Z" fill="#0a1426"/></svg>
<div class="t" style="left:701px;top:473px;font-size:12px;color:#000;line-height:16px;letter-spacing:0.500px;">&lt; Non définie &gt;</div>
<div class="t" style="left:522px;top:541px;font-size:12px;color:#000;line-height:16px;letter-spacing:0.083px;">Code activité prestataire</div>
<div class="a" style="left:695px;top:537px;width:307px;height:22px;border:1px solid #7a7a7a;background:#fff"></div>
<div class="t" style="left:522px;top:575px;font-size:12px;color:#000;line-height:16px;letter-spacing:0.245px;">Activité Web</div>
<div class="a" style="left:695px;top:571px;width:307px;height:22px;border:1px solid #7a7a7a;background:#fff"></div>
<div class="a" style="left:697px;top:573px;width:288px;height:18px;background:#0078ff;outline:1px dotted #f08000;outline-offset:-1px"></div>
<div class="a" style="left:986px;top:572px;width:15px;height:20px;background:linear-gradient(#f6f6f6,#d6d6d6)"></div>
<svg class="a" style="left:990px;top:580px" width="7" height="4"><path d="M0 0 H7 V1 H6 V2 H5 V3 H4 V4 H3 V3 H2 V2 H1 V1 H0 Z" fill="#0a1426"/></svg>
<div class="t" style="left:699px;top:575px;font-size:12px;color:#fff;line-height:16px;letter-spacing:0.400px;">1: Maison individuelle : Maison</div>
<div class="a" style="left:523px;top:635px;width:13px;height:13px;border:1px solid #333;background:#fff"></div>
<div class="t" style="left:543px;top:634px;font-size:12px;color:#000;line-height:16px;letter-spacing:0.200px;">Imprimer systématiquement</div>
<div class="a" style="left:523px;top:665px;width:13px;height:13px;border:1px solid #333;background:#fff"></div>
<div class="t" style="left:543px;top:664px;font-size:12px;color:#000;line-height:16px;letter-spacing:0.200px;">Les producteurs de cet activité</div>
<div class="a" style="left:523px;top:695px;width:13px;height:13px;border:1px solid #333;background:#fff"></div>
<div class="t" style="left:543px;top:694px;font-size:12px;color:#000;line-height:16px;letter-spacing:0.083px;">Activité désactivée</div>
<div class="a" style="left:406px;top:728px;width:636px;height:1px;background:#a0a0a0"></div>
<div class="a" style="left:406px;top:729px;width:636px;height:1px;background:#fff"></div>
<svg class="a sm" style="left:985px;top:733px" width="36" height="34" viewBox="0 0 36 34">
<defs><linearGradient id="rg" x1="0" y1="0" x2="0" y2="1"><stop offset="0.3" stop-color="#ff0000"/><stop offset="1" stop-color="#8a0000"/></linearGradient></defs>
<path d="M2 6 Q8 3 14 10 Q20 4 26 2 L31 5 Q25 8 21 13 Q28 19 30 24 L26 30 Q22 20 15 16 Q10 22 6 28 L2 25 Q8 18 11 14 Q7 10 2 6 Z" fill="url(#rg)"/>
</svg>
<div class="t" style="left:982px;top:765px;font-size:12px;color:#000;line-height:16px;letter-spacing:-0.500px;">Annuler</div>
<div class="a" style="left:695px;top:593px;width:307px;height:200px;border:1px solid #000;background:#fff"></div>
<div class="t" style="left:699px;top:596px;font-size:12px;color:#000;line-height:16px;white-space:pre;">&gt;</div>
<div class="a" style="left:696px;top:612px;width:305px;height:18px;background:#0078ff"></div>
<div class="t" style="left:699px;top:614px;font-size:12px;color:#fff;line-height:16px;letter-spacing:0.400px;white-space:pre;">1: Maison individuelle : Maison</div>
<div class="t" style="left:699px;top:632px;font-size:12px;color:#000;line-height:16px;letter-spacing:0.531px;white-space:pre;">2: Immeuble / bailleur : Bailleur</div>
<div class="t" style="left:699px;top:650px;font-size:12px;color:#000;line-height:16px;letter-spacing:0.356px;white-space:pre;">3: Professionnel : Professionnels</div>
<div class="t" style="left:699px;top:668px;font-size:12px;color:#000;line-height:16px;letter-spacing:0.593px;white-space:pre;">4: Appartement : Appartement</div>
<div class="t" style="left:699px;top:686px;font-size:12px;color:#000;line-height:16px;letter-spacing:0.525px;white-space:pre;">5: Administration : Administation</div>
<div class="t" style="left:699px;top:704px;font-size:12px;color:#000;line-height:16px;letter-spacing:0.825px;white-space:pre;">6:  :</div>
<div class="t" style="left:699px;top:722px;font-size:12px;color:#000;line-height:16px;letter-spacing:0.825px;white-space:pre;">7:  :</div>
<div class="t" style="left:699px;top:740px;font-size:12px;color:#000;line-height:16px;letter-spacing:0.825px;white-space:pre;">8:  :</div>
<div class="t" style="left:699px;top:758px;font-size:12px;color:#000;line-height:16px;letter-spacing:0.825px;white-space:pre;">9:  :</div>
<div class="t" style="left:699px;top:776px;font-size:12px;color:#000;line-height:16px;letter-spacing:0.680px;white-space:pre;">10:  :</div>
</body></html>
